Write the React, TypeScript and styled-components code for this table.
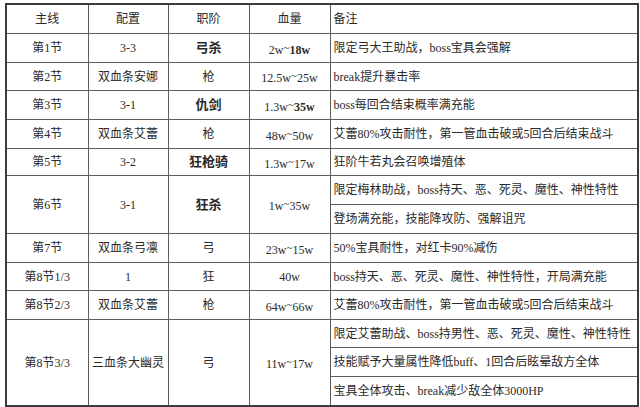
import React, { ReactElement, ReactNode } from 'react'
import styled, { createGlobalStyle } from 'styled-components'

const GlobalStyle = createGlobalStyle`
  html, body {
    margin: 0;
    padding: 0;
    background: #ffffff;
  }
  body {
    font-family: "Liberation Serif", "Noto Sans CJK SC", serif;
    color: #2a2a2a;
  }
`

const Page = styled.div`
  width: 640px;
  height: 407px;
  display: flex;
  flex-direction: column;
  overflow: hidden;
`

const Frame = styled.div`
  padding: 3px 3px 0 5px;
  flex: 1;
`

const BottomStrip = styled.div`
  height: 3px;
  background: #c9c9c9;
`

const Table = styled.table`
  border-collapse: collapse;
  table-layout: fixed;
  width: 632px;
  border: 2px solid #3c3c3c;
  font-size: 12px;
`

const Cell = styled.td<{ $left?: boolean; $h: number; $bold?: boolean }>`
  border: 1px solid #5c5c5c;
  height: ${p => p.$h - 1}px;
  padding: 0 ${p => (p.$left ? '3px' : '0')};
  text-align: ${p => (p.$left ? 'left' : 'center')};
  vertical-align: middle;
  white-space: nowrap;
  line-height: 14px;
  font-weight: ${p => (p.$bold ? 700 : 400)};
  font-size: ${p => (p.$bold ? '13px' : '12px')};
  color: #2a2a2a;
`

const Strong = styled.b`
  font-weight: 700;
`

const Tilde = styled.span`
  display: inline-block;
  vertical-align: 3px;
  font-size: 11px;
`

type Row = {
  heights: number[]
  section: string
  setup: string
  role: string
  roleBold?: boolean
  hp: ReactNode
  notes: string[]
}

const range = (from: string, to: ReactNode): ReactNode => (
  <>
    {from}
    <Tilde>~</Tilde>
    {to}
  </>
)

const rows: Row[] = [
  {
    heights: [29],
    section: '第1节',
    setup: '3-3',
    role: '弓杀',
    roleBold: true,
    hp: range('2w', <Strong>18w</Strong>),
    notes: ['限定弓大王助战，boss宝具会强解'],
  },
  { heights: [28], section: '第2节', setup: '双血条安娜', role: '枪', hp: range('12.5w', '25w'), notes: ['break提升暴击率'] },
  {
    heights: [29],
    section: '第3节',
    setup: '3-1',
    role: '仇剑',
    roleBold: true,
    hp: range('1.3w', <Strong>35w</Strong>),
    notes: ['boss每回合结束概率满充能'],
  },
  {
    heights: [29],
    section: '第4节',
    setup: '双血条艾蕾',
    role: '枪',
    hp: range('48w', '50w'),
    notes: ['艾蕾80%攻击耐性，第一管血击破或5回合后结束战斗'],
  },
  {
    heights: [27],
    section: '第5节',
    setup: '3-2',
    role: '狂枪骑',
    roleBold: true,
    hp: range('1.3w', '17w'),
    notes: ['狂阶牛若丸会召唤增殖体'],
  },
  {
    heights: [29, 29],
    section: '第6节',
    setup: '3-1',
    role: '狂杀',
    roleBold: true,
    hp: range('1w', '35w'),
    notes: ['限定梅林助战，boss持天、恶、死灵、魔性、神性特性', '登场满充能，技能降攻防、强解诅咒'],
  },
  {
    heights: [29],
    section: '第7节',
    setup: '双血条弓凛',
    role: '弓',
    hp: range('23w', '15w'),
    notes: ['50%宝具耐性，对红卡90%减伤'],
  },
  {
    heights: [28],
    section: '第8节1/3',
    setup: '1',
    role: '狂',
    hp: '40w',
    notes: ['boss持天、恶、死灵、魔性、神性特性，开局满充能'],
  },
  {
    heights: [29],
    section: '第8节2/3',
    setup: '双血条艾蕾',
    role: '枪',
    hp: range('64w', '66w'),
    notes: ['艾蕾80%攻击耐性，第一管血击破或5回合后结束战斗'],
  },
  {
    heights: [28, 29, 29],
    section: '第8节3/3',
    setup: '三血条大幽灵',
    role: '弓',
    hp: range('11w', '17w'),
    notes: [
      '限定艾蕾助战、boss持男性、恶、死灵、魔性、神性特性',
      '技能赋予大量属性降低buff、1回合后眩晕敌方全体',
      '宝具全体攻击、break减少敌全体3000HP',
    ],
  },
]

const columnWidths = [82, 80, 81, 81, 308]

const StageRows = ({ row }: { row: Row }): ReactElement => {
  const total = row.heights.reduce((a, b) => a + b, 0)
  const span = row.heights.length
  return (
    <>
      <tr>
        <Cell $h={total} rowSpan={span}>
          {row.section}
        </Cell>
        <Cell $h={total} rowSpan={span}>
          {row.setup}
        </Cell>
        <Cell $h={total} rowSpan={span} $bold={row.roleBold}>
          {row.role}
        </Cell>
        <Cell $h={total} rowSpan={span}>
          {row.hp}
        </Cell>
        <Cell $h={row.heights[0]} $left>
          {row.notes[0]}
        </Cell>
      </tr>
      {row.notes.slice(1).map((note, i) => (
        <tr key={note}>
          <Cell $h={row.heights[i + 1]} $left>
            {note}
          </Cell>
        </tr>
      ))}
    </>
  )
}

const App = (): ReactElement => (
  <Page>
    <GlobalStyle />
    <Frame>
      <Table>
        <colgroup>
          {columnWidths.map((w, i) => (
            <col key={i} style={{ width: w }} />
          ))}
        </colgroup>
        <tbody>
          <tr>
            <Cell $h={29}>主线</Cell>
            <Cell $h={29}>配置</Cell>
            <Cell $h={29}>职阶</Cell>
            <Cell $h={29}>血量</Cell>
            <Cell $h={29} $left>
              备注
            </Cell>
          </tr>
          {rows.map(row => (
            <StageRows key={row.section} row={row} />
          ))}
        </tbody>
      </Table>
    </Frame>
    <BottomStrip />
  </Page>
)

export default App
